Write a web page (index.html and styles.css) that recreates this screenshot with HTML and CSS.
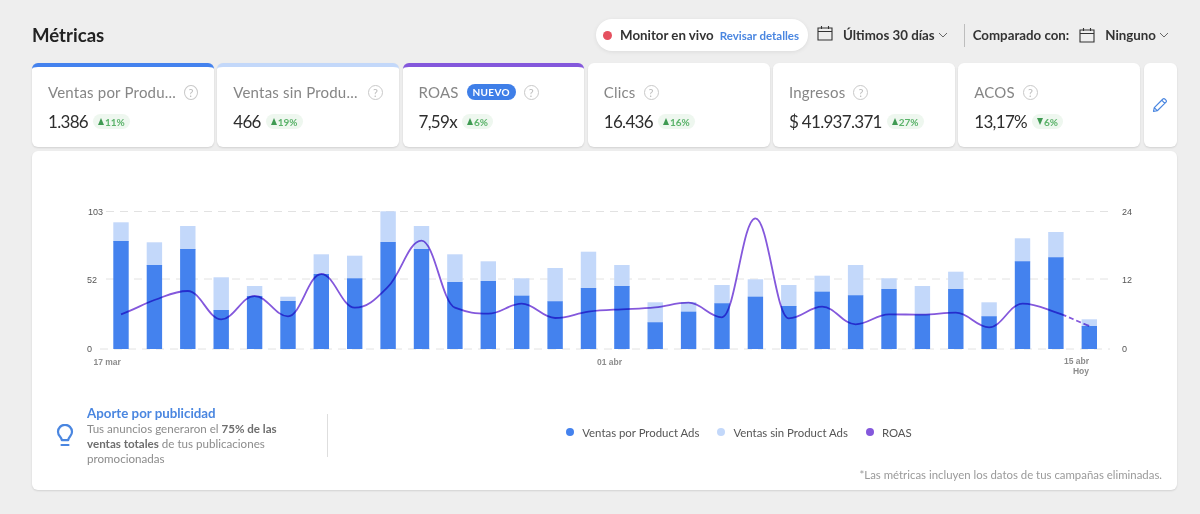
FILE: index.html
```html
<!DOCTYPE html>
<html lang="es">
<head>
<meta charset="utf-8">
<title>Métricas</title>
<link rel="stylesheet" href="styles.css">
</head>
<body>
<main class="page">
  <header class="top">
    <h1 class="title">Métricas</h1>
    <div class="controls">
      <div class="pill">
        <span class="red-dot"></span>
        <span class="pill-label">Monitor en vivo</span>
        <a class="pill-link">Revisar detalles</a>
      </div>
      <div class="picker first-picker">
        <svg class="cal cal-high" viewBox="0 0 16 16"><path d="M1 3h14v12H1zM1 6.500h14M4.500 1v3M11.500 1v3"/></svg>
        <span class="picker-text">Últimos 30 días</span>
        <svg class="chev" viewBox="0 0 10 6"><path d="M1 1l4 4 4-4"/></svg>
      </div>
      <span class="v-sep"></span>
      <div class="picker">
        <span class="picker-text compare">Comparado con:</span>
        <svg class="cal" viewBox="0 0 16 16"><path d="M1 3h14v12H1zM1 6.500h14M4.500 1v3M11.500 1v3"/></svg>
        <span class="picker-text">Ninguno</span>
        <svg class="chev" viewBox="0 0 10 6"><path d="M1 1l4 4 4-4"/></svg>
      </div>
    </div>
  </header>

  <section class="cards">
    <article class="card c-blue">
      <div class="card-head"><span class="label trunc">Ventas por Produ...</span><span class="help">?</span></div>
      <div class="card-body"><span class="value">1.386</span><span class="delta"><i class="up"></i>11%</span></div>
    </article>
    <article class="card c-light">
      <div class="card-head"><span class="label trunc">Ventas sin Produ...</span><span class="help">?</span></div>
      <div class="card-body"><span class="value">466</span><span class="delta"><i class="up"></i>19%</span></div>
    </article>
    <article class="card c-purple">
      <div class="card-head"><span class="label">ROAS</span><span class="new">NUEVO</span><span class="help">?</span></div>
      <div class="card-body"><span class="value">7,59x</span><span class="delta"><i class="up"></i>6%</span></div>
    </article>
    <article class="card">
      <div class="card-head"><span class="label">Clics</span><span class="help">?</span></div>
      <div class="card-body"><span class="value">16.436</span><span class="delta"><i class="up"></i>16%</span></div>
    </article>
    <article class="card">
      <div class="card-head"><span class="label">Ingresos</span><span class="help">?</span></div>
      <div class="card-body"><span class="value">$ 41.937.371</span><span class="delta"><i class="up"></i>27%</span></div>
    </article>
    <article class="card">
      <div class="card-head"><span class="label">ACOS</span><span class="help">?</span></div>
      <div class="card-body"><span class="value">13,17%</span><span class="delta"><i class="down"></i>6%</span></div>
    </article>
    <article class="edit-card">
      <svg class="pencil" viewBox="0 0 16 16"><path d="M1.500 14.500l.8-3.800L10.900 2a1.300 1.300 0 0 1 1.900 0l1.200 1.200a1.300 1.300 0 0 1 0 1.900l-8.700 8.600zM2.300 10.700l3.100 3.100M9.700 3.200l3.100 3.100"/></svg>
    </article>
  </section>

  <section class="panel">
    <svg class="chart" viewBox="32 151 1145 247">
      <g class="grid">
        <path d="M106 211.500H1110M106 279H1110M100 349H1110"/>
      </g>
      <g class="light">
        <rect x="113.300" y="222.300" width="15.400" height="20"/><rect x="146.700" y="242.300" width="15.400" height="24"/><rect x="180.100" y="226" width="15.400" height="24"/><rect x="213.500" y="277.300" width="15.400" height="34"/><rect x="246.900" y="286" width="15.400" height="11"/><rect x="280.300" y="296.700" width="15.400" height="5"/><rect x="313.600" y="254.300" width="15.400" height="20"/><rect x="347" y="255.700" width="15.400" height="23"/><rect x="380.400" y="211.300" width="15.400" height="31"/><rect x="413.800" y="226" width="15.400" height="24"/>
        <rect x="447.200" y="254.300" width="15.400" height="28"/><rect x="480.600" y="261.300" width="15.400" height="20"/><rect x="514" y="278.300" width="15.400" height="18"/><rect x="547.400" y="268" width="15.400" height="34"/><rect x="580.800" y="251.700" width="15.400" height="37"/><rect x="614.200" y="265" width="15.400" height="22"/><rect x="647.500" y="302.300" width="15.400" height="21"/><rect x="680.900" y="302" width="15.400" height="10"/><rect x="714.300" y="285" width="15.400" height="19"/><rect x="747.700" y="279.300" width="15.400" height="18"/>
        <rect x="781.100" y="285" width="15.400" height="22"/><rect x="814.500" y="275.700" width="15.400" height="17"/><rect x="847.900" y="265" width="15.400" height="31"/><rect x="881.300" y="278.300" width="15.400" height="11"/><rect x="914.700" y="286" width="15.400" height="29"/><rect x="948.100" y="271.700" width="15.400" height="18"/><rect x="981.400" y="302.300" width="15.400" height="15"/><rect x="1014.800" y="238.300" width="15.400" height="24"/><rect x="1048.200" y="232" width="15.400" height="26"/><rect x="1081.600" y="319.300" width="15.400" height="7"/>
      </g>
      <g class="dark">
        <rect x="113.300" y="241" width="15.400" height="108"/><rect x="146.700" y="265" width="15.400" height="84"/><rect x="180.100" y="249" width="15.400" height="100"/><rect x="213.500" y="310" width="15.400" height="39"/><rect x="246.900" y="296" width="15.400" height="53"/><rect x="280.300" y="301" width="15.400" height="48"/><rect x="313.600" y="274" width="15.400" height="75"/><rect x="347" y="278.300" width="15.400" height="70.700"/><rect x="380.400" y="242" width="15.400" height="107"/><rect x="413.800" y="249" width="15.400" height="100"/>
        <rect x="447.200" y="282" width="15.400" height="67"/><rect x="480.600" y="281" width="15.400" height="68"/><rect x="514" y="295.700" width="15.400" height="53.300"/><rect x="547.400" y="301.300" width="15.400" height="47.700"/><rect x="580.800" y="288" width="15.400" height="61"/><rect x="614.200" y="286" width="15.400" height="63"/><rect x="647.500" y="322.300" width="15.400" height="26.700"/><rect x="680.900" y="311.700" width="15.400" height="37.300"/><rect x="714.300" y="303.300" width="15.400" height="45.700"/><rect x="747.700" y="296.700" width="15.400" height="52.300"/>
        <rect x="781.100" y="306" width="15.400" height="43"/><rect x="814.500" y="291.700" width="15.400" height="57.300"/><rect x="847.900" y="295.300" width="15.400" height="53.700"/><rect x="881.300" y="289" width="15.400" height="60"/><rect x="914.700" y="314.500" width="15.400" height="34.500"/><rect x="948.100" y="289" width="15.400" height="60"/><rect x="981.400" y="316.300" width="15.400" height="32.700"/><rect x="1014.800" y="261.300" width="15.400" height="87.700"/><rect x="1048.200" y="257.300" width="15.400" height="91.700"/><rect x="1081.600" y="326" width="15.400" height="23"/>
      </g>
      <path class="roas" d="M121 314.300C134 309.800 141.400 305 154.400 300C167.400 295.500 174.800 291 187.800 291C200.800 291 208.200 319.300 221.200 319.300C234.200 319.300 241.600 296 254.600 296C267.600 296 275 316.300 288 316.300C301 316.300 308.300 274 321.300 274C334.300 274 341.700 307.700 354.700 307.700C367.700 307.700 375.100 299.700 388.100 286.700C401.100 273.700 408.500 240.700 421.500 240.700C434.500 240.700 441.900 302.700 454.900 307.700C467.900 312.700 475.300 313.700 488.300 313.700C501.300 313.700 508.700 303.700 521.700 303.700C534.700 303.700 542.100 318 555.100 318C568.100 318 575.500 313.500 588.500 311.700C601.500 310 608.900 310 621.900 309.300C634.900 308.600 642.200 308.600 655.200 307.300C668.200 306 675.600 302.700 688.600 302.700C701.600 302.700 709 317.300 722 317.300C735 317.300 742.400 218.300 755.400 218.300C768.400 218.300 775.800 318.300 788.800 318.300C801.800 318.300 809.200 306.700 822.200 306.700C835.200 306.700 842.600 324.300 855.600 324.300C868.600 324.300 876 314.300 889 314.300C902 314.300 909.400 314.700 922.400 314.700C935.400 314.700 942.800 312.700 955.800 312.700C968.800 312.700 976.100 327.300 989.100 327.300C1002.100 327.300 1009.500 303.700 1022.500 303.700C1035.500 303.700 1042.900 307.900 1055.900 312.300"/>
      <path class="roas roas-dash" d="M1055.900 312.300C1068.900 316.700 1076.300 321 1089.300 326"/>
      <g class="axis">
        <text x="103" y="215" text-anchor="end">103</text>
        <text x="97" y="283" text-anchor="end">52</text>
        <text x="92" y="352" text-anchor="end">0</text>
        <text x="1122" y="215">24</text>
        <text x="1122" y="283">12</text>
        <text x="1122" y="352">0</text>
      </g>
      <g class="dates">
        <text x="93.500" y="365">17 mar</text>
        <text x="597" y="365">01 abr</text>
        <text x="1089" y="364" text-anchor="end">15 abr</text>
        <text x="1089" y="374" text-anchor="end">Hoy</text>
      </g>
    </svg>

    <div class="bottom">
      <div class="insight">
        <svg class="bulb" viewBox="0 0 18 24"><path d="M5.800 16.200c-.2-1.700-1-2.700-2-3.900A7 7 0 0 1 2 7.800a7 7 0 0 1 14 0c0 1.700-.7 3.200-1.800 4.500-1 1.200-1.800 2.200-2 3.900zM5.500 21h7"/></svg>
        <div class="insight-text">
          <h2 class="insight-title">Aporte por publicidad</h2>
          <p class="insight-copy">Tus anuncios generaron el <b>75% de las ventas totales</b> de tus publicaciones promocionadas</p>
        </div>
      </div>
      <ul class="legend">
        <li class="legend-item"><span class="swatch s-blue"></span>Ventas por Product Ads</li>
        <li class="legend-item"><span class="swatch s-light"></span>Ventas sin Product Ads</li>
        <li class="legend-item"><span class="swatch s-purple"></span>ROAS</li>
      </ul>
    </div>
    <p class="footnote">*Las métricas incluyen los datos de tus campañas eliminadas.</p>
  </section>
</main>
</body>
</html>
```
FILE: styles.css
```css
* { box-sizing: border-box; }
html, body { margin: 0; height: 514px; overflow: hidden; }
body { background: #eeeeee; font-family: "Lato", "Liberation Sans", sans-serif; color: #333; }
.page { padding: 0 23px 0 32px; }

.top { height: 63px; display: flex; align-items: center; justify-content: space-between; padding: 7px 8px 0 0; }
.title { margin: 0; font-size: 18.600px; font-weight: 700; color: #222; }
.controls { display: flex; align-items: center; }
.pill { height: 32px; width: 212px; background: #fff; border-radius: 16px; box-shadow: 0 1px 4px rgba(0,0,0,.08); display: flex; align-items: center; padding-left: 7px; }
.red-dot { width: 9px; height: 9px; border-radius: 50%; background: #e5505f; margin-right: 8px; }
.pill-label { font-size: 13.300px; font-weight: 700; color: #333; margin-right: 6px; white-space: nowrap; }
.pill-link { font-size: 11.500px; font-weight: 700; color: #4a86e0; white-space: nowrap; }
.picker { display: flex; align-items: center; }
.first-picker { margin-left: 9px; }
.cal { width: 16px; height: 16px; fill: none; stroke: #333; stroke-width: 1.100; margin-right: 10px; }
.cal-high { margin-top: -4px; }
.picker-text { font-size: 13.300px; font-weight: 700; color: #333; white-space: nowrap; }
.compare { margin-right: 10px; }
.chev { width: 10px; height: 6px; margin-left: 3px; fill: none; stroke: #666; stroke-width: 1; }
.v-sep { width: 1px; height: 23px; background: #bdbdbd; margin: 0 8px 0 16px; }

.cards { display: flex; gap: 3.500px; height: 84px; }
.card { flex: 1 1 0; min-width: 0; background: #fff; border-radius: 6px; border-top: 4px solid #fff; box-shadow: 0 1px 2px rgba(0,0,0,.12); padding: 14px 16px 0; }
.c-blue { border-top-color: #4482ee; }
.c-light { border-top-color: #c3d8fa; }
.c-purple { border-top-color: #8458dc; }
.card-head { display: flex; align-items: center; height: 22px; }
.label { font-size: 15px; letter-spacing: .2px; color: #868686; white-space: nowrap; }
.trunc { flex: 1; }
.help { width: 15px; height: 15px; border-radius: 50%; border: 1px solid #c9c9c9; color: #bcbcbc; font-size: 11px; line-height: 13px; text-align: center; margin-left: 8px; }
.new { background: #3f7fe8; color: #fff; font-size: 10px; font-weight: 700; letter-spacing: .3px; height: 16px; line-height: 16px; padding: 0 6px; border-radius: 8px; margin-left: 8px; }
.card-body { display: flex; align-items: center; margin-top: 8px; }
.value { font-size: 17px; letter-spacing: -.7px; color: #2e2e2e; white-space: nowrap; }
.delta { display: inline-flex; align-items: center; height: 15px; border-radius: 8px; background: #eef7ef; color: #5bb36a; font-size: 10px; font-weight: 700; padding: 0 5px 0 5px; margin-left: 5px; }
.up { width: 0; height: 0; border: 3.500px solid transparent; border-top: 0; border-bottom: 7px solid #3f9a52; margin-right: 1px; }
.down { width: 0; height: 0; border: 3.500px solid transparent; border-bottom: 0; border-top: 7px solid #3f9a52; margin-right: 1px; }
.edit-card { flex: 0 0 33.500px; background: #fff; border-radius: 6px; box-shadow: 0 1px 2px rgba(0,0,0,.12); display: flex; align-items: center; justify-content: center; }
.pencil { width: 16px; height: 16px; fill: none; stroke: #4a86e0; stroke-width: 1.200; stroke-linejoin: round; }

.panel { margin-top: 4px; height: 339px; background: #fff; border-radius: 6px; box-shadow: 0 1px 2px rgba(0,0,0,.12); }
.chart { display: block; width: 1145px; height: 247px; }
.grid path { stroke: #e2e2e2; stroke-width: 1; stroke-dasharray: 8 6; fill: none; }
.light rect { fill: #c3d8fa; }
.dark rect { fill: #4482ee; }
.roas { fill: none; stroke: #8458dc; stroke-width: 1.800; mix-blend-mode: multiply; }
.roas-dash { stroke-dasharray: 11 3 5 3 5 3 6; }
.axis text { font-family: "Liberation Sans", sans-serif; font-size: 9px; fill: #555; }
.dates text { font-family: "Liberation Sans", sans-serif; font-size: 8.500px; font-weight: 700; fill: #8c8c8c; }

.bottom { display: flex; align-items: center; height: 70px; }
.insight { width: 296px; flex: none; display: flex; align-items: center; padding-left: 24px; margin-top: 5px; position: relative; }
.insight::after { content: ""; position: absolute; right: 0; top: 9px; height: 43px; width: 1px; background: #dedede; }
.bulb { width: 18px; height: 24px; flex: none; fill: none; stroke: #4a86e0; stroke-width: 2.200; stroke-linecap: round; stroke-linejoin: round; margin-right: 13px; }
.insight-text { width: 205px; }
.insight-title { margin: 0; font-size: 13.300px; line-height: 16px; font-weight: 700; color: #4a86e0; }
.insight-copy { margin: 0; font-size: 11.600px; line-height: 15px; color: #8c8c8c; }
.insight-copy b { color: #6e6e6e; }
.legend { flex: 1; list-style: none; margin: 0; padding: 0 27px 2px 0; display: flex; justify-content: center; gap: 18px; }
.legend-item { display: flex; align-items: center; font-size: 11.400px; color: #555; white-space: nowrap; }
.swatch { width: 8px; height: 8px; border-radius: 50%; margin-right: 8px; }
.s-blue { background: #4482ee; }
.s-light { background: #c3d8fa; }
.s-purple { background: #8458dc; }
.footnote { margin: 0; padding: 0 15px 0 0; line-height: 14px; text-align: right; font-size: 11.400px; color: #9a9a9a; }
```
